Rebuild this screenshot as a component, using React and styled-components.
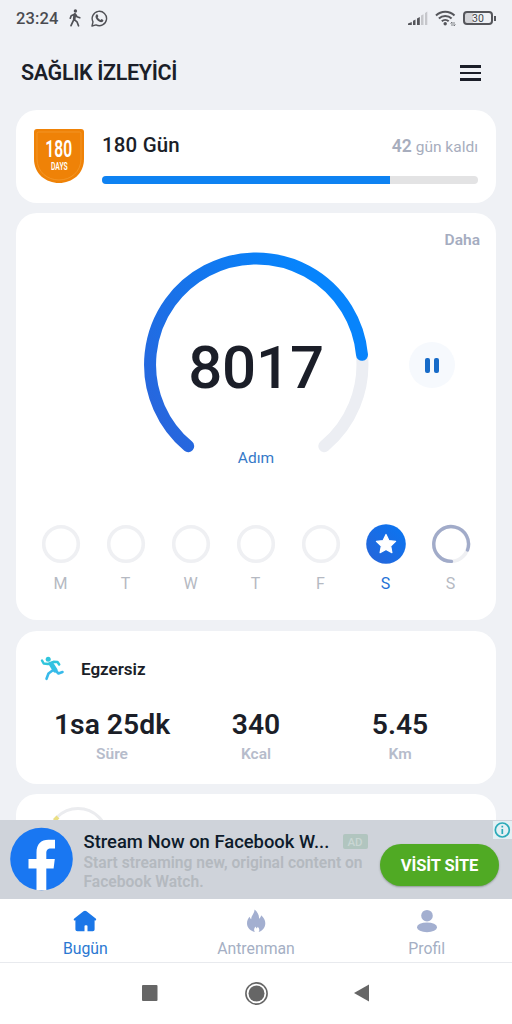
import React from "react";
import styled, { createGlobalStyle, css } from "styled-components";

const GlobalStyle = createGlobalStyle`
  * {
    box-sizing: border-box;
  }

  body {
    margin: 0;
    background: #eff1f5;
    font-family: Roboto, "Noto Sans", sans-serif;
    color: #1b1e28;
  }

  svg {
    display: block;
    flex-shrink: 0;
  }
`;

const Screen = styled.div`
  width: 512px;
  height: 1024px;
  display: flex;
  flex-direction: column;
  overflow: hidden;
`;

/* Status bar */
const StatusBar = styled.div`
  height: 36px;
  flex-shrink: 0;
  display: flex;
  align-items: center;
  padding: 0 16px 0 16px;
`;

const Clock = styled.span`
  font-size: 16.5px;
  font-weight: 500;
  letter-spacing: 0.15px;
  color: #4a4b50;
  width: 53px;
  white-space: nowrap;
`;

const StatusGroup = styled.div`
  display: flex;
  align-items: center;
  gap: ${(props) => props.$gap}px;
  margin-left: ${(props) => (props.$right ? "auto" : 0)};
`;

const Battery = styled.div`
  display: flex;
  align-items: center;
`;

const BatteryBody = styled.div`
  width: 30px;
  height: 14px;
  border: 2px solid #55565b;
  border-radius: 4px;
  background: linear-gradient(90deg, #d3d4d8 8px, transparent 8px);
  font-size: 10.5px;
  line-height: 11px;
  text-align: center;
  color: #45464a;
`;

const BatteryTip = styled.div`
  width: 2px;
  height: 5px;
  margin-left: 1px;
  background: #55565b;
`;

/* Header */
const Header = styled.header`
  height: 74px;
  flex-shrink: 0;
  display: flex;
  align-items: center;
  justify-content: space-between;
  padding: 0 31px 0 21px;
`;

const Title = styled.h1`
  margin: 0;
  font-size: 21.5px;
  line-height: 26px;
  font-weight: 600;
  letter-spacing: -0.35px;
  white-space: nowrap;
`;

const MenuButton = styled.div`
  width: 21px;
  display: grid;
  gap: 4px;
`;

const MenuLine = styled.div`
  height: 2.5px;
  background: #1b1e28;
`;

/* Cards */
const Content = styled.main`
  height: 710px;
  flex-shrink: 0;
  overflow: hidden;
  display: flex;
  flex-direction: column;
  padding: 0 16px;
`;

const cardStyle = css`
  background: #fff;
  border-radius: 21px;
  flex-shrink: 0;
`;

const BadgeCard = styled.section`
  ${cardStyle}
  height: 93px;
  margin-bottom: 10px;
  padding: 18px 18px 0;
  display: flex;
`;

const Badge = styled.div`
  width: 50px;
  height: 56px;
  display: grid;

  > * {
    grid-area: 1 / 1;
  }
`;

const BadgeText = styled.div`
  display: flex;
  flex-direction: column;
  align-items: center;
  padding-top: 11px;
  color: #fff;
`;

const BadgeNumber = styled.span`
  font-size: 23px;
  line-height: 22px;
  font-weight: 600;
  transform: scaleX(0.68);
`;

const BadgeDays = styled.span`
  margin-top: 1px;
  font-size: 10px;
  line-height: 10px;
  font-weight: 600;
  transform: scaleX(0.68);
`;

const BadgeInfo = styled.div`
  flex: 1;
  margin-left: 18px;
`;

const BadgeRow = styled.div`
  height: 48px;
  display: flex;
  align-items: baseline;
  justify-content: space-between;
  padding-top: 4px;
`;

const BadgeTitle = styled.span`
  font-size: 20.5px;
  line-height: 26px;
  font-weight: 500;
  letter-spacing: 0.15px;
`;

const Remaining = styled.span`
  font-size: 15.5px;
  color: #a7adbd;

  b {
    font-size: 17.5px;
    font-weight: 600;
  }
`;

const Progress = styled.div`
  height: 8px;
  border-radius: 4px;
  background: #e3e3e4;
  overflow: hidden;
`;

const ProgressFill = styled.div`
  width: 288px;
  height: 8px;
  background: #0e82f2;
`;

const StepsCard = styled.section`
  ${cardStyle}
  height: 407px;
  margin-bottom: 11px;
  display: flex;
  flex-direction: column;
`;

const More = styled.div`
  height: 39px;
  padding: 17px 16px 0 0;
  text-align: right;
  font-size: 15.5px;
  line-height: 20px;
  font-weight: 600;
  color: #a5acc0;
`;

const GaugeRow = styled.div`
  height: 226px;
  display: grid;
  grid-template-columns: 127px 226px 1fr;
  align-items: center;
`;

const Gauge = styled.div`
  grid-column: 2;
  width: 226px;
  height: 226px;
  display: grid;

  > * {
    grid-area: 1 / 1;
  }
`;

const StepCount = styled.div`
  font-size: 60px;
  line-height: 70px;
  font-weight: 500;
  letter-spacing: -0.2px;
  text-align: center;
  padding-top: 81px;
`;

const PauseButton = styled.div`
  width: 46px;
  height: 46px;
  margin-left: 40px;
  border-radius: 50%;
  background: #f6f9fd;
  display: flex;
  align-items: center;
  justify-content: center;
  gap: 4.5px;
`;

const PauseBar = styled.div`
  width: 4.5px;
  height: 15px;
  border-radius: 2px;
  background: #176bc8;
`;

const StepLabel = styled.div`
  height: 46px;
  margin-top: -30px;
  text-align: center;
  font-size: 15.5px;
  line-height: 20px;
  color: #3579c8;
`;

const Week = styled.div`
  display: grid;
  grid-template-columns: repeat(7, 65px);
  padding-left: 12px;
  margin-top: 30px;
`;

const Day = styled.div`
  display: flex;
  flex-direction: column;
  align-items: center;
  gap: 10px;
  font-size: 16px;
  line-height: 20px;
  color: ${(props) => (props.$active ? "#1f72d6" : "#b5b9c2")};
`;

const ExerciseCard = styled.section`
  ${cardStyle}
  height: 153px;
  margin-bottom: 10px;
  padding: 24px 24px 0;
`;

const ExerciseHead = styled.div`
  height: 27px;
  display: flex;
  align-items: center;
  gap: 16px;
  font-size: 17px;
  font-weight: 600;
`;

const Stats = styled.div`
  display: grid;
  grid-template-columns: repeat(3, 1fr);
  margin-top: 25px;
  text-align: center;
`;

const StatValue = styled.div`
  font-size: 28.3px;
  line-height: 36px;
  font-weight: 600;
  white-space: nowrap;
`;

const StatLabel = styled.div`
  font-size: 15.5px;
  line-height: 20px;
  margin-top: 1px;
  font-weight: 600;
  color: #b6bccb;
`;

const NextCard = styled.section`
  ${cardStyle}
  height: 90px;
  padding: 12px 30px;
`;

/* Ad */
const Ad = styled.aside`
  position: relative;
  height: 79px;
  flex-shrink: 0;
  display: flex;
  padding: 7px 13px 0 10px;
  background: #cfd3da;
`;

const AdCopy = styled.div`
  width: 286px;
  margin-left: 10.5px;
  padding-top: 3px;
`;

const AdTitle = styled.div`
  display: flex;
  align-items: center;
  justify-content: space-between;
  height: 22px;
  font-size: 18.4px;
  font-weight: 500;
  color: #0d1b2b;
  white-space: nowrap;
`;

const AdTag = styled.span`
  width: 25px;
  height: 15px;
  margin-right: 2px;
  border-radius: 2px;
  background: #b1c5bf;
  color: #c9d6d3;
  font-size: 11.5px;
  line-height: 16px;
  text-align: center;
`;

const AdBody = styled.div`
  font-size: 15.6px;
  line-height: 18.5px;
  margin-top: 2px;
  font-weight: 600;
  color: #b4b9bf;
  white-space: nowrap;
`;

const AdButton = styled.div`
  width: 119px;
  height: 42px;
  margin: 17px 0 0 auto;
  border-radius: 21px;
  background: #50aa24;
  box-shadow: 0 1px 2px rgba(60, 80, 60, 0.45);
  color: #fff;
  font-size: 16.5px;
  line-height: 43px;
  font-weight: 700;
  letter-spacing: -0.1px;
  text-align: center;
  white-space: nowrap;
`;

const AdChoices = styled.div`
  position: absolute;
  top: 1px;
  right: 0;
  width: 19px;
  height: 18px;
  background: #e4f0f4;
`;

/* Bottom bars */
const TabBar = styled.nav`
  height: 64px;
  flex-shrink: 0;
  display: grid;
  grid-template-columns: repeat(3, 1fr);
  background: #fff;
  border-bottom: 1px solid #e8eaee;
`;

const Tab = styled.div`
  display: flex;
  flex-direction: column;
  align-items: center;
  gap: 6px;
  padding-top: 10px;
  font-size: 15.8px;
  line-height: 20px;
  color: ${(props) => (props.$active ? "#2b78d2" : "#a5afc4")};
`;

const SystemBar = styled.div`
  flex: 1;
  display: flex;
  align-items: center;
  background: #fff;
  padding: 0 143px 1px 142px;
  justify-content: space-between;
`;

const WalkIcon = () => (
  <svg width="12" height="18" viewBox="0 0 12 18" fill="none" stroke="#505156" strokeWidth="1.7" strokeLinecap="round" strokeLinejoin="round">
    <circle cx="6.4" cy="2" r="1.7" fill="#505156" stroke="none" />
    <path d="M5.7 5.2 4.8 10.7 2 16.7M5 10.3l3 2.5 1.5 4M5.5 5.2 2.2 6.7 1.3 9.2M6.5 5.4l1.5 2.3 2.8 1" />
    <path d="M5.9 5.5 5.2 10" strokeWidth="2.7" />
  </svg>
);

const WhatsappIcon = () => (
  <svg width="17" height="17" viewBox="0 0 17 17">
    <path d="M1 16l1-4.1A7.2 7.2 0 1 1 5 14.9z" fill="none" stroke="#505156" strokeWidth="1.4" strokeLinejoin="round" />
    <path d="M5.2 4.8c.7-.8 1.3-.6 1.6.1l.5 1.2c.1.4-.5 1-.6 1.2.7 1.3 1.5 2.1 2.8 2.7.3-.1.8-1 1.2-.9l1.5.8c.6.4-.1 1.8-1.2 2.2-1.2.5-3.6-.6-5.1-2.4C4.3 8 4.1 6.1 5.2 4.8z" fill="#505156" />
  </svg>
);

const SignalIcon = () => (
  <svg width="20" height="14" viewBox="0 0 20 14">
    <path d="M0 14v-1.5L3.8 11v3zM5 9.700l2.500-1.200V14H5zM9 7.500l2.800-1.500v8H9z" fill="#55565b" />
    <path d="M13 4.500l2.500-1.300V14H13zM17 2l2.300-1.500V14H17z" fill="#c6c7cb" />
  </svg>
);

const WifiIcon = () => (
  <svg width="21" height="17" viewBox="0 0 21 17" fill="none" stroke="#55565b" strokeWidth="2">
    <path d="M1 5.500a13 13 0 0 1 18.500 0M3.900 8.500a9 9 0 0 1 12.700 0M6.800 11.300a5 5 0 0 1 6.900 0" />
    <circle cx="10.200" cy="13.700" r="1.700" fill="#55565b" stroke="none" />
    <path d="M17 16v-4M15.500 13.500 17 12M19 12v4M20.500 14.500 19 16" strokeWidth=".7" />
  </svg>
);

const BadgeShape = () => (
  <svg width="50" height="56" viewBox="0 0 50 56">
    <path d="M3 1h44q3 0 3 3v27c0 15-12 24-25 24S0 46 0 31V4q0-3 3-3z" fill="#ef8207" />
    <path d="M4.500 4h41q1.500 0 1.500 1.500V31c0 13-10.500 21-22 21S3 44 3 31V5.500Q3 4 4.500 4z" fill="none" stroke="#f49a2e" strokeWidth=".8" />
  </svg>
);

const GaugeArc = () => (
  <svg width="226" height="226" viewBox="0 0 226 226" fill="none" strokeWidth="12" strokeLinecap="round">
    <defs>
      <linearGradient id="steps" x1="20" y1="190" x2="190" y2="60" gradientUnits="userSpaceOnUse">
        <stop offset="0" stopColor="#2965dc" />
        <stop offset=".55" stopColor="#1674eb" />
        <stop offset="1" stopColor="#0784fc" />
      </linearGradient>
    </defs>
    <path d="M219 103A106 106 0 0 1 181.300 194.200" stroke="#eceef3" />
    <path d="M45.200 194.200A106.200 106.200 0 1 1 219 102.800" stroke="url(#steps)" />
  </svg>
);

const DayRing = ({ state }) => (
  <svg width="40" height="40" viewBox="0 0 40 40" fill="none">
    {state === "done" ? (
      <>
        <defs>
          <linearGradient id="day" x1="0" y1="1" x2="1" y2="0">
            <stop offset="0" stopColor="#2864d8" />
            <stop offset="1" stopColor="#0876f3" />
          </linearGradient>
        </defs>
        <circle cx="20" cy="20" r="19.800" fill="url(#day)" />
        <path d="M20 10.500l2.900 6 6.700.9-4.900 4.600 1.200 6.600-5.900-3.200-5.900 3.200 1.200-6.600-4.900-4.600 6.700-.9z" fill="#fff" stroke="#fff" strokeWidth="1.200" strokeLinejoin="round" />
      </>
    ) : (
      <circle cx="20" cy="20" r="17.300" stroke="#eff0f3" strokeWidth="3.600" />
    )}
    {state === "partial" && (
      <path d="M20.500 37.400A17.400 17.400 0 1 1 36.500 26" stroke="#a1abc9" strokeWidth="3.400" strokeLinecap="round" />
    )}
  </svg>
);

const RunIcon = () => (
  <svg width="25" height="25" viewBox="0 0 25 25" fill="none" strokeLinecap="round" strokeLinejoin="round">
    <circle cx="8.200" cy="3.300" r="2.500" fill="#30c5dc" />
    <path d="M2 4.500 3.700 7.500 8 8 13.500 5.800 17.500 6 19.200 8.500" stroke="#30c5dc" strokeWidth="2.500" />
    <path d="M11.500 8.500 15 14" stroke="#32c1e2" strokeWidth="5" />
    <path d="M15.500 14.500 18.500 17.500 22.500 16M12.500 14.500 8.500 17.500 6.500 22.800" stroke="#38baea" strokeWidth="2.600" />
  </svg>
);

const PartialRing = () => (
  <svg width="64" height="64" viewBox="0 0 64 64" fill="none">
    <circle cx="32" cy="32" r="29.500" stroke="#ebecef" strokeWidth="3" />
    <path d="M8.500 14.500 12 11" stroke="#eadf83" strokeWidth="4" />
  </svg>
);

const FacebookIcon = () => (
  <svg width="63" height="64" viewBox="0 0 63 64">
    <circle cx="31.500" cy="32" r="31.300" fill="#1977f2" />
    <path d="M26.500 63V41.500h-8V32h8v-6.500C26.500 17 31 12.800 38.500 12.800H45v8.700h-4c-3.500 0-4.700 1.700-4.700 4.700V32h8.500l-1.200 9.500h-7.300V63z" fill="#fff" />
  </svg>
);

const InfoIcon = () => (
  <svg width="19" height="18" viewBox="0 0 19 18" fill="none" stroke="#2caab9" strokeWidth="1.700">
    <circle cx="9.300" cy="9" r="7" />
    <path d="M9.300 8v5M9.300 4.800v1.600" />
  </svg>
);

const HomeIcon = () => (
  <svg width="24" height="24" viewBox="0 0 24 24">
    <path d="M10.500 2.300q1.500-1.300 3 0l9.200 7.200q1 .9.200 1.700-.6.600-1.300.1v9.200q0 1.800-1.800 1.800h-5.300v-5q0-1-1-1h-1q-1 0-1 1v5H4.400q-2 0-2-1.800v-9.200q-1.200.4-1.600-.4-.4-.8.500-1.500z" fill="#1b77e8" />
  </svg>
);

const FlameIcon = () => (
  <svg width="24" height="24" viewBox="0 0 24 24">
    <path d="M10.500.5c3.200 2.600 4.800 5.700 4.500 9.200 1.500-.9 2-2.100 2-3.400 2.800 2.300 4.300 4.800 4.300 8 0 4.200-2.600 7.500-6.700 8.700 1.300-1.900.7-3.600-.9-5.200l-.8 1.600c-.7-.3-1.200-1-1.300-1.800-1.600 1.700-2 3.500-.8 5.400C6.500 22 3 19 3 14.300c0-2.900 1.200-5 2.600-6.600.3 1.200.8 2 1.600 2.500C7.400 6.200 10.500 4.700 10.500.5z" fill="#a3afd0" />
  </svg>
);

const ProfileIcon = () => (
  <svg width="24" height="24" viewBox="0 0 24 24" fill="#a3afd0">
    <circle cx="12" cy="6.700" r="5.800" />
    <ellipse cx="12" cy="18.300" rx="10" ry="4.900" />
  </svg>
);

const DAYS = [
  { label: "M" },
  { label: "T" },
  { label: "W" },
  { label: "T" },
  { label: "F" },
  { label: "S", state: "done" },
  { label: "S", state: "partial" },
];

const STATS = [
  { value: "1sa 25dk", label: "Süre" },
  { value: "340", label: "Kcal" },
  { value: "5.45", label: "Km" },
];

export default function App() {
  return (
    <Screen>
      <GlobalStyle />
      <StatusBar>
        <Clock>23:24</Clock>
        <StatusGroup $gap={10}>
          <WalkIcon />
          <WhatsappIcon />
        </StatusGroup>
        <StatusGroup $right $gap={7}>
          <SignalIcon />
          <WifiIcon />
          <Battery>
            <BatteryBody>30</BatteryBody>
            <BatteryTip />
          </Battery>
        </StatusGroup>
      </StatusBar>
      <Header>
        <Title>SAĞLIK İZLEYİCİ</Title>
        <MenuButton>
          <MenuLine />
          <MenuLine />
          <MenuLine />
        </MenuButton>
      </Header>
      <Content>
        <BadgeCard>
          <Badge>
            <BadgeShape />
            <BadgeText>
              <BadgeNumber>180</BadgeNumber>
              <BadgeDays>DAYS</BadgeDays>
            </BadgeText>
          </Badge>
          <BadgeInfo>
            <BadgeRow>
              <BadgeTitle>180 Gün</BadgeTitle>
              <Remaining>
                <b>42</b> gün kaldı
              </Remaining>
            </BadgeRow>
            <Progress>
              <ProgressFill />
            </Progress>
          </BadgeInfo>
        </BadgeCard>
        <StepsCard>
          <More>Daha</More>
          <GaugeRow>
            <Gauge>
              <GaugeArc />
              <StepCount>8017</StepCount>
            </Gauge>
            <PauseButton>
              <PauseBar />
              <PauseBar />
            </PauseButton>
          </GaugeRow>
          <StepLabel>Adım</StepLabel>
          <Week>
            {DAYS.map((day, i) => (
              <Day key={i} $active={day.state === "done"}>
                <DayRing state={day.state} />
                {day.label}
              </Day>
            ))}
          </Week>
        </StepsCard>
        <ExerciseCard>
          <ExerciseHead>
            <RunIcon />
            Egzersiz
          </ExerciseHead>
          <Stats>
            {STATS.map((stat) => (
              <div key={stat.label}>
                <StatValue>{stat.value}</StatValue>
                <StatLabel>{stat.label}</StatLabel>
              </div>
            ))}
          </Stats>
        </ExerciseCard>
        <NextCard>
          <PartialRing />
        </NextCard>
      </Content>
      <Ad>
        <FacebookIcon />
        <AdCopy>
          <AdTitle>
            Stream Now on Facebook W...
            <AdTag>AD</AdTag>
          </AdTitle>
          <AdBody>
            Start streaming new, original content on
            <br />
            Facebook Watch.
          </AdBody>
        </AdCopy>
        <AdButton>VİSİT SİTE</AdButton>
        <AdChoices>
          <InfoIcon />
        </AdChoices>
      </Ad>
      <TabBar>
        <Tab $active>
          <HomeIcon />
          Bugün
        </Tab>
        <Tab>
          <FlameIcon />
          Antrenman
        </Tab>
        <Tab>
          <ProfileIcon />
          Profil
        </Tab>
      </TabBar>
      <SystemBar>
        <svg width="16" height="16" viewBox="0 0 16 16">
          <rect width="15.500" height="16" rx="1" fill="#666" />
        </svg>
        <svg width="23" height="23" viewBox="0 0 23 23">
          <circle cx="11.500" cy="11.500" r="10.600" fill="none" stroke="#666" strokeWidth="1.600" />
          <circle cx="11.500" cy="11.500" r="8" fill="#666" />
        </svg>
        <svg width="15" height="18" viewBox="0 0 15 18">
          <path d="M15 .5v17L0 9z" fill="#666" />
        </svg>
      </SystemBar>
    </Screen>
  );
}
